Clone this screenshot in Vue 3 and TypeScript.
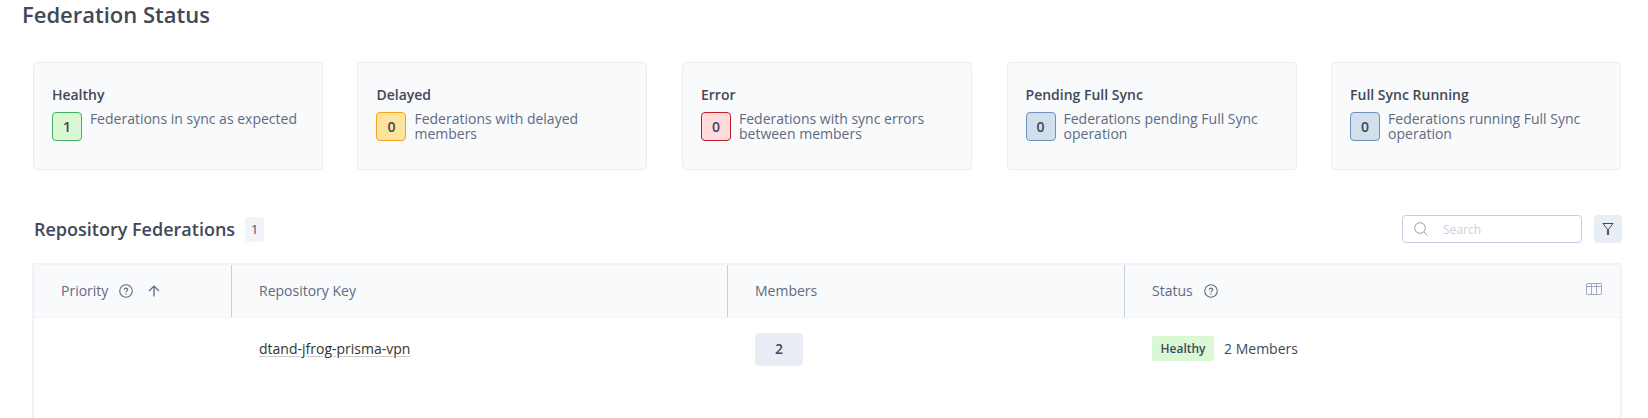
<script setup lang="ts">
interface StatusCard {
  title: string
  count: number
  text: string
  tone: 'green' | 'amber' | 'red' | 'blue'
}

const cards: StatusCard[] = [
  { title: 'Healthy', count: 1, text: 'Federations in sync as expected', tone: 'green' },
  { title: 'Delayed', count: 0, text: 'Federations with delayed members', tone: 'amber' },
  { title: 'Error', count: 0, text: 'Federations with sync errors between members', tone: 'red' },
  { title: 'Pending Full Sync', count: 0, text: 'Federations pending Full Sync operation', tone: 'blue' },
  { title: 'Full Sync Running', count: 0, text: 'Federations running Full Sync operation', tone: 'blue' },
]

const columns = [
  { label: 'Priority', help: true, sorted: true },
  { label: 'Repository Key', help: false, sorted: false },
  { label: 'Members', help: false, sorted: false },
  { label: 'Status', help: true, sorted: false },
]

const rows = [{ key: 'dtand-jfrog-prisma-vpn', members: 2, status: 'Healthy' }]
</script>

<template>
  <main class="page">
    <h1 class="page-title">Federation Status</h1>

    <section class="cards">
      <article v-for="card in cards" :key="card.title" class="card">
        <h2 class="card-title">{{ card.title }}</h2>
        <div class="card-body">
          <span class="count" :class="card.tone">{{ card.count }}</span>
          <p class="card-text">{{ card.text }}</p>
        </div>
      </article>
    </section>

    <header class="toolbar">
      <h2 class="section-title">Repository Federations</h2>
      <span class="total">{{ rows.length }}</span>
      <label class="search">
        <svg class="search-icon" width="14" height="14" viewBox="0 0 14 14">
          <circle cx="6" cy="6" r="5.3" />
          <path d="M9.8 9.8 13.4 13.4" />
        </svg>
        <input type="text" placeholder="Search" />
      </label>
      <button class="filter" type="button" aria-label="Filter">
        <svg width="12" height="12" viewBox="0 0 12 12">
          <path class="funnel" d="M.9.5H11.1L6.6 6.2V11.9H5.4V6.2Z" />
        </svg>
      </button>
    </header>

    <section class="table">
      <div class="row head">
        <div v-for="col in columns" :key="col.label" class="cell">
          <span>{{ col.label }}</span>
          <svg v-if="col.help" class="help" width="14" height="14" viewBox="0 0 14 14">
            <circle cx="7" cy="7" r="6.3" />
            <path d="M5.3 5.7C5.3 3.5 8.8 3.6 8.8 5.6 8.8 6.9 7 6.8 7 8.2" />
            <path d="M7 9.3V10.6" />
          </svg>
          <svg v-if="col.sorted" class="sort" width="12" height="12" viewBox="0 0 12 12">
            <path d="M6 11.5V1.3M1.1 6 6 1.1 10.9 6" />
          </svg>
        </div>
        <svg class="columns-icon" width="16" height="12" viewBox="0 0 16 12">
          <rect x=".5" y=".5" width="15" height="11" rx=".6" />
          <path d="M.5 3.5H15.5M5.5 .5V11.5M10.5 .5V11.5" />
        </svg>
      </div>
      <div v-for="row in rows" :key="row.key" class="row body">
        <div class="cell"></div>
        <div class="cell"><a class="repo">{{ row.key }}</a></div>
        <div class="cell"><span class="members">{{ row.members }}</span></div>
        <div class="cell">
          <span class="tag">{{ row.status }}</span>
          <span class="member-count">{{ row.members }} Members</span>
        </div>
      </div>
    </section>
  </main>
</template>

<style>
body {
  background: #fff;
  overflow: hidden;
}
</style>

<style scoped>
.page {
  box-sizing: border-box;
  height: 418px;
  padding: 0 26px 0 32px;
  overflow: hidden;
  font-family: 'Open Sans', 'Noto Sans', sans-serif;
  font-size: 14px;
  color: #414857;
}
.page * {
  box-sizing: border-box;
}
h1,
h2,
p {
  margin: 0;
}
.page-title {
  height: 62px;
  margin-left: -10px;
  font-size: 22px;
  line-height: 28px;
  font-weight: 600;
}
.cards {
  display: flex;
  justify-content: space-between;
  margin: 0 0.9px;
}
.card {
  width: 290px;
  height: 108px;
  padding: 22px 18px;
  border: 1px solid #e9edf5;
  border-radius: 4px;
  background: #f9fafc;
}
.card-title {
  font-size: 14px;
  line-height: 20px;
  font-weight: 600;
}
.card-body {
  display: flex;
  align-items: flex-start;
  gap: 8px;
  margin-top: 6px;
}
.count {
  flex: none;
  width: 30px;
  height: 29px;
  margin-top: 1px;
  border: 1px solid;
  border-radius: 4px;
  line-height: 28px;
  text-align: center;
  font-weight: 600;
}
.green {
  background: #daf8d4;
  border-color: #40b065;
}
.amber {
  background: #ffe49e;
  border-color: #f8a31b;
}
.red {
  background: #ffdbdd;
  border-color: #c41f24;
}
.blue {
  background: #d2dfec;
  border-color: #7090bb;
}
.card-text {
  line-height: 15px;
  color: #5f6b80;
}
.toolbar {
  display: flex;
  align-items: center;
  height: 28px;
  margin-top: 45px;
}
.section-title {
  margin-left: 2px;
  font-size: 18px;
  line-height: 28px;
  font-weight: 600;
}
.total {
  width: 19px;
  height: 25px;
  margin-left: 10px;
  border-radius: 4px;
  background: #f2f3f9;
  font-size: 12px;
  line-height: 25px;
  text-align: center;
}
.search {
  display: flex;
  align-items: center;
  width: 180px;
  height: 28px;
  margin-left: auto;
  padding-left: 11px;
  border: 1px solid #c5cbe3;
  border-radius: 4px;
}
.search-icon {
  flex: none;
  margin-top: -1px;
  fill: none;
  stroke: #9aa3ba;
}
.search input {
  width: 130px;
  margin-left: 15px;
  padding: 0;
  border: 0;
  outline: 0;
  background: transparent;
  font: 12px 'Open Sans', sans-serif;
}
.search input::placeholder {
  color: #c9d0e2;
}
.filter {
  display: flex;
  align-items: center;
  justify-content: center;
  width: 28px;
  height: 28px;
  margin-left: 12px;
  padding: 0;
  border: 0;
  border-radius: 4px;
  background: #e9eef6;
}
.funnel {
  fill: none;
  stroke: #414857;
}
.table {
  height: 180px;
  margin-top: 20px;
  border: 2px solid #f1f2f8;
  border-radius: 4px;
}
.row {
  position: relative;
  display: grid;
  grid-template-columns: 197px 496px 397px 1fr;
}
.head {
  height: 53px;
  border-bottom: 1px solid #f1f2f8;
  background: #f9fafc;
  color: #5f6b80;
}
.cell {
  display: flex;
  align-items: center;
  padding-left: 27px;
}
.head .cell > span {
  margin-top: -2px;
}
.head .cell + .cell {
  border-left: 1px solid #c8cde0;
}
.body .cell + .cell {
  padding-left: 28px;
}
.body {
  height: 62px;
}
.help {
  margin-left: 11px;
  fill: none;
  stroke: #5f6b80;
  stroke-width: 1.1;
}
.sort {
  margin-left: 15px;
  fill: none;
  stroke: #5f6b80;
  stroke-width: 1.3;
}
.columns-icon {
  position: absolute;
  right: 18px;
  top: 18px;
  fill: none;
  stroke: #a3a8c0;
}
.repo {
  margin-top: -2px;
  color: #333;
  text-decoration: underline;
  text-decoration-color: #ccc;
  text-underline-offset: 2px;
}
.members {
  width: 48px;
  height: 33px;
  border-radius: 4px;
  background: #e9eef6;
  line-height: 32px;
  text-align: center;
  font-weight: 600;
}
.tag {
  height: 25px;
  margin: -1px 10px 0 0;
  padding: 0 8.5px;
  border-radius: 2px;
  background: #daf8d4;
  font-size: 12px;
  line-height: 25px;
  font-weight: 600;
}
.member-count {
  margin-top: -2px;
}
</style>
